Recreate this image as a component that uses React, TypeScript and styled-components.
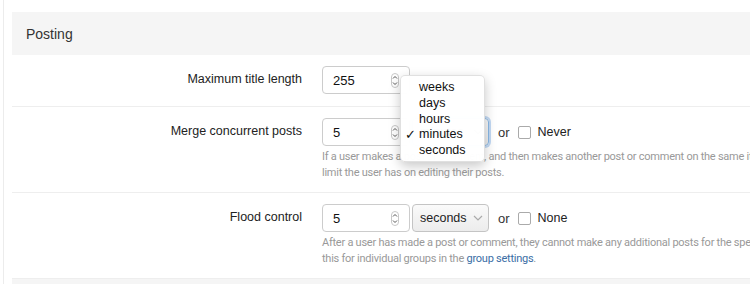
import React from "react";
import styled, { createGlobalStyle } from "styled-components";

const Global = createGlobalStyle`
  html, body { margin: 0; padding: 0; background: #fff; overflow: hidden; }
  body { font-family: "Liberation Sans", Arial, sans-serif; color: #333; }
`;

const Shell = styled.div`
  margin-left: 3px;
  border-left: 1px solid #ececec;
  padding: 12px 0 0 8px;
  width: 1100px;
  height: 284px;
  box-sizing: border-box;
  overflow: hidden;
`;

const SectionHead = styled.div`
  background: #f5f5f5;
  height: 43px;
  display: flex;
  align-items: center;
  padding-left: 14px;
  font-size: 14px;
  color: #333;
`;

const Row = styled.div<{ $h: number }>`
  display: grid;
  grid-template-columns: 290px 1fr;
  column-gap: 20px;
  padding: 11px 0 11px;
  border-bottom: 1px solid #eee;
  min-height: ${(p) => p.$h}px;
  box-sizing: border-box;
`;

const Label = styled.div`
  text-align: right;
  font-size: 12.5px;
  line-height: 27px;
  color: #222;
`;

const Controls = styled.div`
  display: flex;
  align-items: center;
  height: 28px;
`;

const NumberBox = styled.div`
  width: 88px;
  height: 28px;
  box-sizing: border-box;
  border: 1px solid #ccc;
  border-radius: 4px;
  display: flex;
  align-items: center;
  justify-content: space-between;
  padding: 0 10px 0 10px;
  font-size: 13px;
  color: #111;
  background: #fff;
`;

const SelectWrap = styled.div`
  position: relative;
  margin-left: 2px;
`;

const SelectBox = styled.div<{ $focus?: boolean }>`
  width: 77px;
  height: 28px;
  box-sizing: border-box;
  border: 1px solid ${(p) => (p.$focus ? "#8ab8e6" : "#c4c4c4")};
  box-shadow: ${(p) => (p.$focus ? "0 0 0 2px rgba(120,170,230,.45)" : "none")};
  border-radius: 4px;
  background: linear-gradient(#fafafa, #ececec);
  display: flex;
  align-items: center;
  justify-content: space-between;
  padding: 0 5px 0 7px;
  font-size: 12.5px;
  color: #222;
`;

const Or = styled.span`
  font-size: 13px;
  margin: 0 8px 0 9px;
  color: #333;
`;

const Check = styled.span`
  width: 13px;
  height: 13px;
  box-sizing: border-box;
  border: 1px solid #aaa;
  border-radius: 2px;
  background: #fff;
  margin-right: 7px;
`;

const CheckText = styled.span`
  font-size: 12.5px;
  color: #222;
`;

const Help = styled.div`
  grid-column: 2;
  font-family: Roboto, "Liberation Sans", sans-serif;
  font-size: 11px;
  letter-spacing: -0.25px;
  line-height: 16px;
  color: #999;
  white-space: nowrap;
  margin-top: 3px;
`;

const Link = styled.a`
  color: #3a6ea5;
  text-decoration: none;
`;

const Popup = styled.div`
  position: absolute;
  left: -12px;
  top: -43px;
  width: 83px;
  padding: 4px 0 2px;
  background: rgba(255, 255, 255, 0.98);
  border: 1px solid rgba(0, 0, 0, 0.12);
  border-radius: 5px;
  box-shadow: 0 4px 12px rgba(0, 0, 0, 0.22);
  z-index: 5;
`;

const Option = styled.div`
  position: relative;
  height: 15.75px;
  line-height: 15.75px;
  padding-left: 18px;
  font-size: 12.5px;
  color: #111;
`;

const Tick = styled.span`
  position: absolute;
  left: 4px;
  top: 0;
  font-size: 13px;
`;

const Spinner = () => (
  <svg width="8" height="15" viewBox="0 0 8 15">
    <rect x="0.5" y="0.5" width="7" height="14" rx="3.5" fill="#fff" stroke="#c8c8c8" />
    <polyline points="2,5.5 4,3.5 6,5.5" fill="none" stroke="#555" strokeWidth="1" />
    <polyline points="2,9.5 4,11.5 6,9.5" fill="none" stroke="#555" strokeWidth="1" />
  </svg>
);

const Chevron = () => (
  <svg width="10" height="6" viewBox="0 0 10 6">
    <polyline points="1,1 5,5 9,1" fill="none" stroke="#aaa" strokeWidth="1.2" />
  </svg>
);

const units = ["weeks", "days", "hours", "minutes", "seconds"];

export default function App() {
  return (
    <>
      <Global />
      <Shell>
        <SectionHead>Posting</SectionHead>
        <Row $h={52}>
          <Label>Maximum title length</Label>
          <Controls>
            <NumberBox>
              255
              <Spinner />
            </NumberBox>
          </Controls>
        </Row>
        <Row $h={86}>
          <Label>Merge concurrent posts</Label>
          <Controls>
            <NumberBox>
              5
              <Spinner />
            </NumberBox>
            <SelectWrap>
              <SelectBox $focus>
                minutes
                <Chevron />
              </SelectBox>
              <Popup>
                {units.map((u) => (
                  <Option key={u}>
                    {u === "minutes" && <Tick>✓</Tick>}
                    {u}
                  </Option>
                ))}
              </Popup>
            </SelectWrap>
            <Or>or</Or>
            <Check />
            <CheckText>Never</CheckText>
          </Controls>
          <Help>
            If a user makes a post or comment, and then makes another post or comment on the same item within this time, the posts are merged. This is separate from the
            <br />
            limit the user has on editing their posts.
          </Help>
        </Row>
        <Row $h={86}>
          <Label>Flood control</Label>
          <Controls>
            <NumberBox>
              5
              <Spinner />
            </NumberBox>
            <SelectWrap>
              <SelectBox>
                seconds
                <Chevron />
              </SelectBox>
            </SelectWrap>
            <Or>or</Or>
            <Check />
            <CheckText>None</CheckText>
          </Controls>
          <Help>
            After a user has made a post or comment, they cannot make any additional posts for the specified amount of time. You can override
            <br />
            this for individual groups in the <Link href="#">group settings</Link>.
          </Help>
        </Row>
        <SectionHead />
      </Shell>
    </>
  );
}
